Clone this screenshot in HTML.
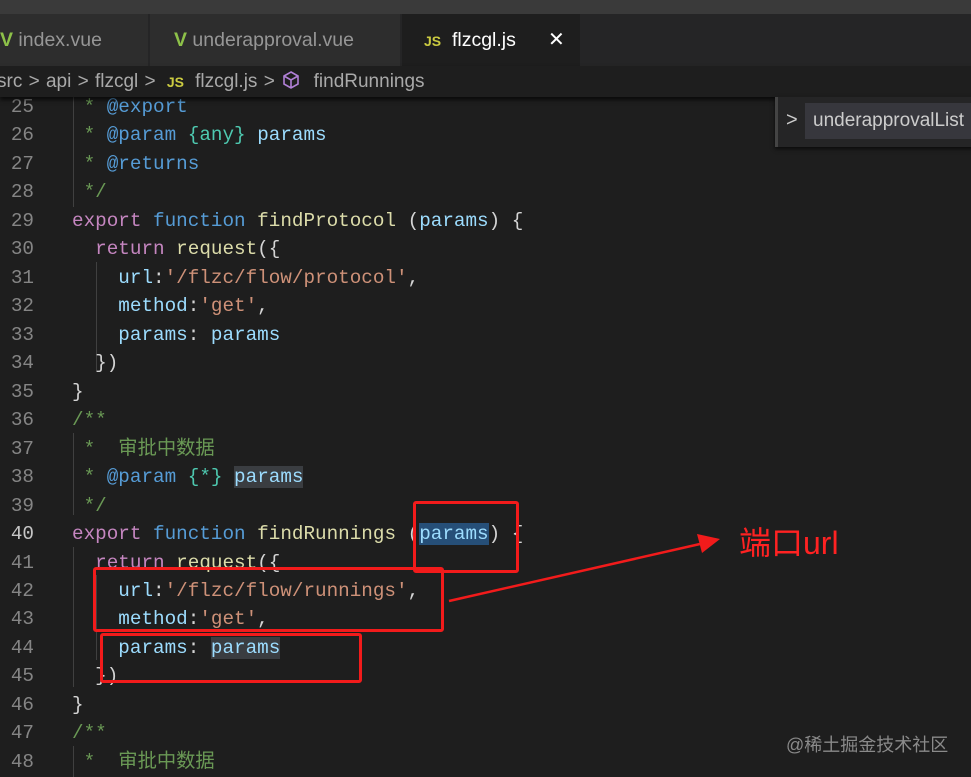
<!DOCTYPE html>
<html><head><meta charset="utf-8"><style>
body{margin:0;width:971px;height:777px;background:#1e1e1e;overflow:hidden;position:relative;font-family:"Liberation Sans","Noto Sans CJK SC",sans-serif}
.top{position:absolute;left:0;top:0;width:971px;height:14px;background:#3a3a3a}
.tabs{position:absolute;left:0;top:14px;width:971px;height:52px;background:#252526}
.tab{position:absolute;top:0;height:52px;background:#2d2d2d;color:#969696;font-size:19.5px;line-height:52px}
.crumb{position:absolute;left:0;top:66px;width:971px;height:31px;background:#1e1e1e;color:#a9a9a9;font-size:19px;line-height:31px;z-index:2;box-shadow:0 3px 4px #000a}
.code{position:absolute;left:0;top:93px;font-family:"Liberation Mono","Noto Sans CJK SC",monospace;font-size:19.3px}
.l{height:28.48px;line-height:28.48px;white-space:pre;position:relative}
.n{position:absolute;left:0;width:34px;text-align:right;color:#858585}
.t{position:absolute;left:72px;color:#d4d4d4}
.c{color:#6a9955}.k{color:#c586c0}.b{color:#569cd6}.f{color:#dcdcaa}.p{color:#9cdcfe}.s{color:#ce9178}.g{color:#4ec9b0}
.h{background:#3a3d41}.sel{background:#264f78}
.guide{position:absolute;width:1px;background:#404040}
.box{position:absolute;border:3px solid #f21b1b;border-radius:3px;z-index:3}
</style></head><body>
<div class="top"></div>
<div class="tabs">
 <div class="tab" style="left:0;width:148px"><span style="color:#8dc149;font-weight:bold;margin-left:0">V</span> index.vue</div>
 <div class="tab" style="left:150px;width:250px"><span style="color:#8dc149;font-weight:bold;margin-left:24px">V</span> underapproval.vue</div>
 <div class="tab" style="left:402px;width:178px;background:#1e1e1e;color:#fff"><span style="color:#cbcb41;font-size:14px;font-weight:bold;margin-left:22px">JS</span>&nbsp; flzcgl.js<span style="position:absolute;left:146px;font-size:20px">✕</span></div>
</div>
<div class="crumb"><span style="margin-left:-3px;word-spacing:1px">src &gt; api &gt; flzcgl &gt; <span style="color:#cbcb41;font-size:14px;font-weight:bold">&nbsp;JS&nbsp;</span> flzcgl.js &gt; <svg width="20" height="20" viewBox="0 0 20 20" style="vertical-align:-3px"><path d="M10 2 L17 6 L17 14 L10 18 L3 14 L3 6 Z M3 6 L10 10 L17 6 M10 10 L10 18" fill="none" stroke="#b180d7" stroke-width="1.6"/></svg>&nbsp; findRunnings</span></div>
<div style="position:absolute;left:775px;top:97px;width:196px;height:50px;background:#252526;border-left:3px solid #444;z-index:3;box-shadow:0 2px 4px #000a">
 <span style="position:absolute;left:8px;top:12px;color:#ccc;font-size:20px">&gt;</span>
 <div style="position:absolute;left:27px;top:6px;width:170px;height:36px;background:#37373d;color:#ccc;font-size:19px;line-height:36px;padding-left:8px">underapprovalList</div>
</div>
<div class="guide" style="left:73px;top:97px;height:110px"></div>
<div class="guide" style="left:96px;top:262px;height:110px"></div>
<div class="guide" style="left:73px;top:433px;height:82px"></div>
<div class="guide" style="left:73px;top:547px;height:140px"></div>
<div class="guide" style="left:96px;top:575px;height:85px"></div>
<div class="guide" style="left:73px;top:746px;height:31px"></div>
<div class="code">
<div class="l"><span class="n">25</span><span class="t"> <span class="c">*</span> <span class="b">@export</span></span></div>
<div class="l"><span class="n">26</span><span class="t"> <span class="c">*</span> <span class="b">@param</span> <span class="g">{any}</span> <span class="p">params</span></span></div>
<div class="l"><span class="n">27</span><span class="t"> <span class="c">*</span> <span class="b">@returns</span></span></div>
<div class="l"><span class="n">28</span><span class="t"> <span class="c">*/</span></span></div>
<div class="l"><span class="n">29</span><span class="t"><span class="k">export</span> <span class="b">function</span> <span class="f">findProtocol</span> (<span class="p">params</span>) {</span></div>
<div class="l"><span class="n">30</span><span class="t">  <span class="k">return</span> <span class="f">request</span>({</span></div>
<div class="l"><span class="n">31</span><span class="t">    <span class="p">url</span>:<span class="s">'/flzc/flow/protocol'</span>,</span></div>
<div class="l"><span class="n">32</span><span class="t">    <span class="p">method</span>:<span class="s">'get'</span>,</span></div>
<div class="l"><span class="n">33</span><span class="t">    <span class="p">params</span>: <span class="p">params</span></span></div>
<div class="l"><span class="n">34</span><span class="t">  })</span></div>
<div class="l"><span class="n">35</span><span class="t">}</span></div>
<div class="l"><span class="n">36</span><span class="t"><span class="c">/**</span></span></div>
<div class="l"><span class="n">37</span><span class="t"> <span class="c">*  审批中数据</span></span></div>
<div class="l"><span class="n">38</span><span class="t"> <span class="c">*</span> <span class="b">@param</span> <span class="g">{*}</span> <span class="p h">params</span></span></div>
<div class="l"><span class="n">39</span><span class="t"> <span class="c">*/</span></span></div>
<div class="l"><span class="n" style="color:#c6c6c6">40</span><span class="t"><span class="k">export</span> <span class="b">function</span> <span class="f">findRunnings</span> (<span class="p sel">params</span>) {</span></div>
<div class="l"><span class="n">41</span><span class="t">  <span class="k">return</span> <span class="f">request</span>({</span></div>
<div class="l"><span class="n">42</span><span class="t">    <span class="p">url</span>:<span class="s">'/flzc/flow/runnings'</span>,</span></div>
<div class="l"><span class="n">43</span><span class="t">    <span class="p">method</span>:<span class="s">'get'</span>,</span></div>
<div class="l"><span class="n">44</span><span class="t">    <span class="p">params</span>: <span class="p h">params</span></span></div>
<div class="l"><span class="n">45</span><span class="t">  })</span></div>
<div class="l"><span class="n">46</span><span class="t">}</span></div>
<div class="l"><span class="n">47</span><span class="t"><span class="c">/**</span></span></div>
<div class="l"><span class="n">48</span><span class="t"> <span class="c">*  审批中数据</span></span></div>
</div>
<div class="box" style="left:413px;top:501px;width:100px;height:66px"></div>
<div class="box" style="left:93px;top:567px;width:345px;height:59px"></div>
<div class="box" style="left:100px;top:633px;width:256px;height:44px"></div>
<svg style="position:absolute;left:0;top:0;z-index:4" width="971" height="777"><path d="M449 601 L700 544" stroke="#f21b1b" stroke-width="2.5"/><path d="M720 539 L697 534 L702 553 Z" fill="#f21b1b"/></svg>
<div style="position:absolute;left:739px;top:518px;color:#f22;font-size:32px;z-index:4">端口url</div>
<div style="position:absolute;left:786px;top:731px;color:#8a8a8a;font-size:18px">@稀土掘金技术社区</div>
</body></html>
